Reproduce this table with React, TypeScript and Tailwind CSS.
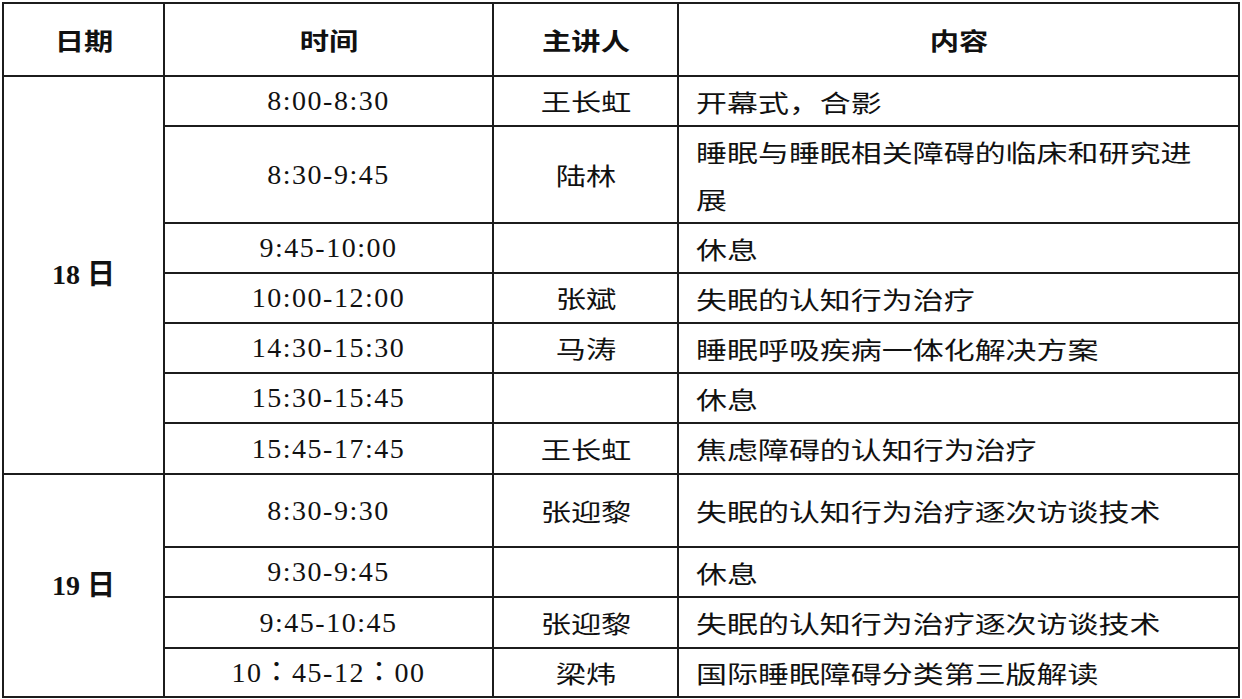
import React from 'react';

const cjk = '"Noto Sans CJK SC", "Noto Sans", sans-serif';
const serif = '"Liberation Serif", "Noto Sans CJK TC", serif';

type Row = {
  time: string;
  speaker: string;
  content: React.ReactNode;
  h: string;
};

const day18: Row[] = [
  { time: '8:00-8:30', speaker: '王长虹', content: '开幕式，合影', h: 'h-[50px]' },
  {
    time: '8:30-9:45',
    speaker: '陆林',
    content: (
      <>
        睡眠与睡眠相关障碍的临床和研究进
        <br />展
      </>
    ),
    h: 'h-[97px]',
  },
  { time: '9:45-10:00', speaker: '', content: '休息', h: 'h-[50px]' },
  { time: '10:00-12:00', speaker: '张斌', content: '失眠的认知行为治疗', h: 'h-[50px]' },
  { time: '14:30-15:30', speaker: '马涛', content: '睡眠呼吸疾病一体化解决方案', h: 'h-[50px]' },
  { time: '15:30-15:45', speaker: '', content: '休息', h: 'h-[50px]' },
  { time: '15:45-17:45', speaker: '王长虹', content: '焦虑障碍的认知行为治疗', h: 'h-[51px]' },
];

const day19: Row[] = [
  { time: '8:30-9:30', speaker: '张迎黎', content: '失眠的认知行为治疗逐次访谈技术', h: 'h-[73px]' },
  { time: '9:30-9:45', speaker: '', content: '休息', h: 'h-[50px]' },
  { time: '9:45-10:45', speaker: '张迎黎', content: '失眠的认知行为治疗逐次访谈技术', h: 'h-[51px]' },
  { time: '10：45-12：00', speaker: '梁炜', content: '国际睡眠障碍分类第三版解读', h: 'h-[48px]' },
];

const cell = 'border-2 border-[#1c1c1c] p-0 align-middle';

function DayRows({ label, rows }: { label: string; rows: Row[] }) {
  return (
    <>
      {rows.map((r, i) => (
        <tr key={r.time} className={r.h}>
          {i === 0 && (
            <td
              rowSpan={rows.length}
              className={`${cell} text-center text-[28px] font-bold`}
              style={{ fontFamily: '"Liberation Serif", "Noto Sans CJK SC", serif' }}
            >
              {label}
            </td>
          )}
          <td
            className={`${cell} text-center text-[28px] tracking-[1.5px] whitespace-pre`}
            style={{ fontFamily: serif }}
          >
            {r.time}
          </td>
          <td className={`${cell} text-center text-[24px]`} style={{ fontFamily: cjk }}>
            <span className="inline-block scale-x-[1.26]">{r.speaker}</span>
          </td>
          <td
            className={`${cell} pl-[17px] text-left text-[24px] leading-[47px]`}
            style={{ fontFamily: cjk }}
          >
            <span className="inline-block origin-left scale-x-[1.29]">{r.content}</span>
          </td>
        </tr>
      ))}
    </>
  );
}

export default function App() {
  return (
    <div className="w-[1242px] h-[699px] bg-white pl-[2px] pt-[2px] text-[#111]">
      <table className="table-fixed border-collapse w-[1236px]">
        <colgroup>
          <col className="w-[161px]" />
          <col className="w-[329px]" />
          <col className="w-[185px]" />
          <col className="w-[561px]" />
        </colgroup>
        <thead>
          <tr className="h-[73px]">
            {['日期', '时间', '主讲人', '内容'].map((t) => (
              <th
                key={t}
                className={`${cell} text-center text-[24px] font-bold`}
                style={{ fontFamily: cjk }}
              >
                <span className="inline-block scale-x-[1.22]">{t}</span>
              </th>
            ))}
          </tr>
        </thead>
        <tbody>
          <DayRows label="18 日" rows={day18} />
          <DayRows label="19 日" rows={day19} />
        </tbody>
      </table>
    </div>
  );
}
